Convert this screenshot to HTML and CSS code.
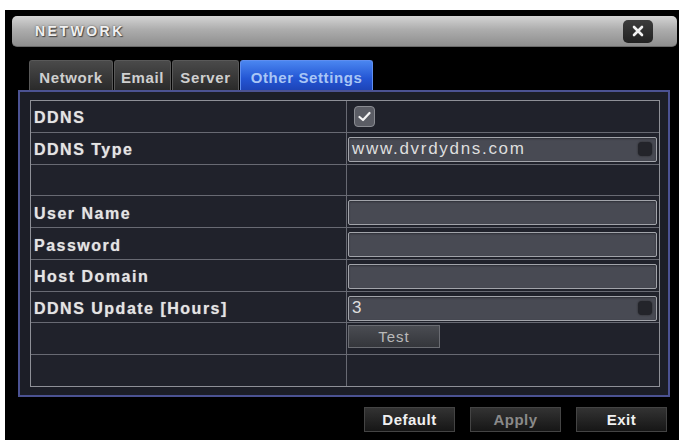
FILE: index.html
```html
<!DOCTYPE html>
<html lang="en">
<head>
    <meta charset="UTF-8">
    <meta name="viewport" content="width=device-width, initial-scale=1.0">
    <title>Network</title>
    <link rel="stylesheet" href="styles.css">
</head>
<body>
    <div class="frame">
        <div class="titlebar">
            <span class="title">NETWORK</span>
            <div class="close">
                <svg width="12" height="12" viewBox="0 0 12 12"><path d="M2 2 L10 10 M10 2 L2 10" stroke="#f2f2f2" stroke-width="2.6" stroke-linecap="round"/></svg>
            </div>
        </div>
        <div class="tabs">
            <div class="tab tab-network">Network</div>
            <div class="tab tab-email">Email</div>
            <div class="tab tab-server">Server</div>
            <div class="tab tab-other active">Other Settings</div>
        </div>
        <div class="panel">
            <div class="table">
                <div class="row">
                    <div class="label">DDNS</div>
                    <div class="value">
                        <div class="checkbox">
                            <svg width="13" height="11" viewBox="0 0 13 11"><path d="M1.5 6 L5 9 L11.5 2" fill="none" stroke="#f4f4f4" stroke-width="2.2" stroke-linecap="round" stroke-linejoin="round"/></svg>
                        </div>
                    </div>
                </div>
                <div class="row">
                    <div class="label">DDNS Type</div>
                    <div class="value">
                        <div class="field select">
                            <span>www.dvrdydns.com</span>
                            <span class="drop"></span>
                        </div>
                    </div>
                </div>
                <div class="row">
                    <div class="label"></div>
                    <div class="value"></div>
                </div>
                <div class="row">
                    <div class="label">User Name</div>
                    <div class="value"><div class="field"></div></div>
                </div>
                <div class="row">
                    <div class="label">Password</div>
                    <div class="value"><div class="field"></div></div>
                </div>
                <div class="row">
                    <div class="label">Host Domain</div>
                    <div class="value"><div class="field"></div></div>
                </div>
                <div class="row">
                    <div class="label">DDNS Update [Hours]</div>
                    <div class="value">
                        <div class="field select">
                            <span>3</span>
                            <span class="drop"></span>
                        </div>
                    </div>
                </div>
                <div class="row">
                    <div class="label"></div>
                    <div class="value"><div class="test-btn">Test</div></div>
                </div>
                <div class="row">
                    <div class="label"></div>
                    <div class="value"></div>
                </div>
            </div>
        </div>
        <div class="actions">
            <div class="btn">Default</div>
            <div class="btn disabled">Apply</div>
            <div class="btn">Exit</div>
        </div>
    </div>
</body>
</html>
```

FILE: styles.css
```css
body {
    margin: 0;
    background: #fff;
    font-family: "Liberation Sans", Arial, sans-serif;
}
.frame {
    margin: 10px 0 0 5px;
    width: 674px;
    height: 430px;
    background: #000;
    padding-top: 6px;
    box-sizing: border-box;
}
.titlebar {
    margin-left: 7px;
    width: 665px;
    height: 31px;
    box-sizing: border-box;
    border-radius: 5px;
    background: linear-gradient(#d4d4d4, #adadad 45%, #8e8e8e);
    border-bottom: 1px solid #6a6a6a;
    display: flex;
    align-items: center;
    justify-content: space-between;
    padding: 0 24px 0 23px;
}
.title {
    font-size: 14px;
    font-weight: bold;
    letter-spacing: 2.5px;
    color: #f0f0f0;
    text-shadow: 0 0 2px #555, 1px 1px 1px #444;
}
.close {
    width: 30px;
    height: 23px;
    border-radius: 5px;
    background: linear-gradient(#3c3c3c, #222);
    display: flex;
    align-items: center;
    justify-content: center;
}
.tabs {
    display: flex;
    gap: 1px;
    margin: 13px 0 0 24px;
    height: 30px;
}
.tab {
    box-sizing: border-box;
    height: 30px;
    border: 1px solid #595959;
    border-bottom: none;
    border-radius: 3px 3px 0 0;
    background: linear-gradient(#4a4a4a, #2a2a2a);
    color: #cfcfcf;
    font-size: 15px;
    font-weight: bold;
    letter-spacing: 0.6px;
    display: flex;
    align-items: center;
    justify-content: center;
    padding-top: 3px;
}
.tab-network { width: 84px; }
.tab-email { width: 57px; }
.tab-server { width: 67px; }
.tab-other { width: 133px; }
.tab.active {
    background: linear-gradient(#4a86f0, #2456d4 60%, #1d44b8);
    border-color: #5f8ef0;
    color: #a9c6f5;
}
.panel {
    margin-left: 13px;
    width: 652px;
    height: 307px;
    box-sizing: border-box;
    border: 2px solid #4b5292;
    background: #1c1e27;
    padding: 8px 8px 0 10px;
}
.table {
    height: 287px;
    box-sizing: border-box;
    border: 1px solid #8e9097;
    background: #20222b;
    display: flex;
    flex-direction: column;
}
.row {
    flex: 1;
    display: flex;
    border-top: 1px solid #686a73;
}
.row:first-child {
    border-top: none;
}
.label {
    width: 316px;
    border-right: 1px solid #686a73;
    box-sizing: border-box;
    padding: 4px 0 0 3px;
    display: flex;
    align-items: center;
    font-size: 16px;
    font-weight: bold;
    letter-spacing: 1.5px;
    color: #e4e4e4;
    text-shadow: 0 0 1px #999;
}
.value {
    flex: 1;
    padding: 4px 2px 0 1px;
    display: flex;
    align-items: flex-start;
}
.checkbox {
    margin: 1px 0 0 6px;
    width: 21px;
    height: 21px;
    box-sizing: border-box;
    border: 1px solid #8a8c92;
    border-radius: 4px;
    background: #5b5d65;
    display: flex;
    align-items: center;
    justify-content: center;
}
.field {
    width: 100%;
    height: 25px;
    box-sizing: border-box;
    border: 1px solid #a2a4aa;
    border-radius: 2px;
    background: #484a53;
    box-shadow: inset 0 1px 2px #2e3037;
    display: flex;
    align-items: center;
    justify-content: space-between;
    padding: 0 4px 0 3px;
    font-size: 17px;
    letter-spacing: 1.7px;
    color: #dedede;
}
.drop {
    width: 14px;
    height: 14px;
    border-radius: 4px;
    background: #23242a;
    box-shadow: 0 0 2px #222;
}
.test-btn {
    width: 92px;
    height: 23px;
    margin-top: -2px;
    box-sizing: border-box;
    border: 1px solid #6a6c72;
    background: linear-gradient(#4a4c52, #34363b);
    color: #b9b9b9;
    font-size: 15px;
    letter-spacing: 1px;
    display: flex;
    align-items: center;
    justify-content: center;
}
.actions {
    display: flex;
    gap: 15px;
    margin: 10px 0 0 359px;
}
.btn {
    width: 91px;
    height: 25px;
    box-sizing: border-box;
    border: 1px solid #444;
    background: linear-gradient(#333, #161616);
    color: #f0f0f0;
    font-size: 15px;
    font-weight: bold;
    letter-spacing: 0.5px;
    display: flex;
    align-items: center;
    justify-content: center;
}
.btn.disabled {
    color: #8a8a8a;
}
```
